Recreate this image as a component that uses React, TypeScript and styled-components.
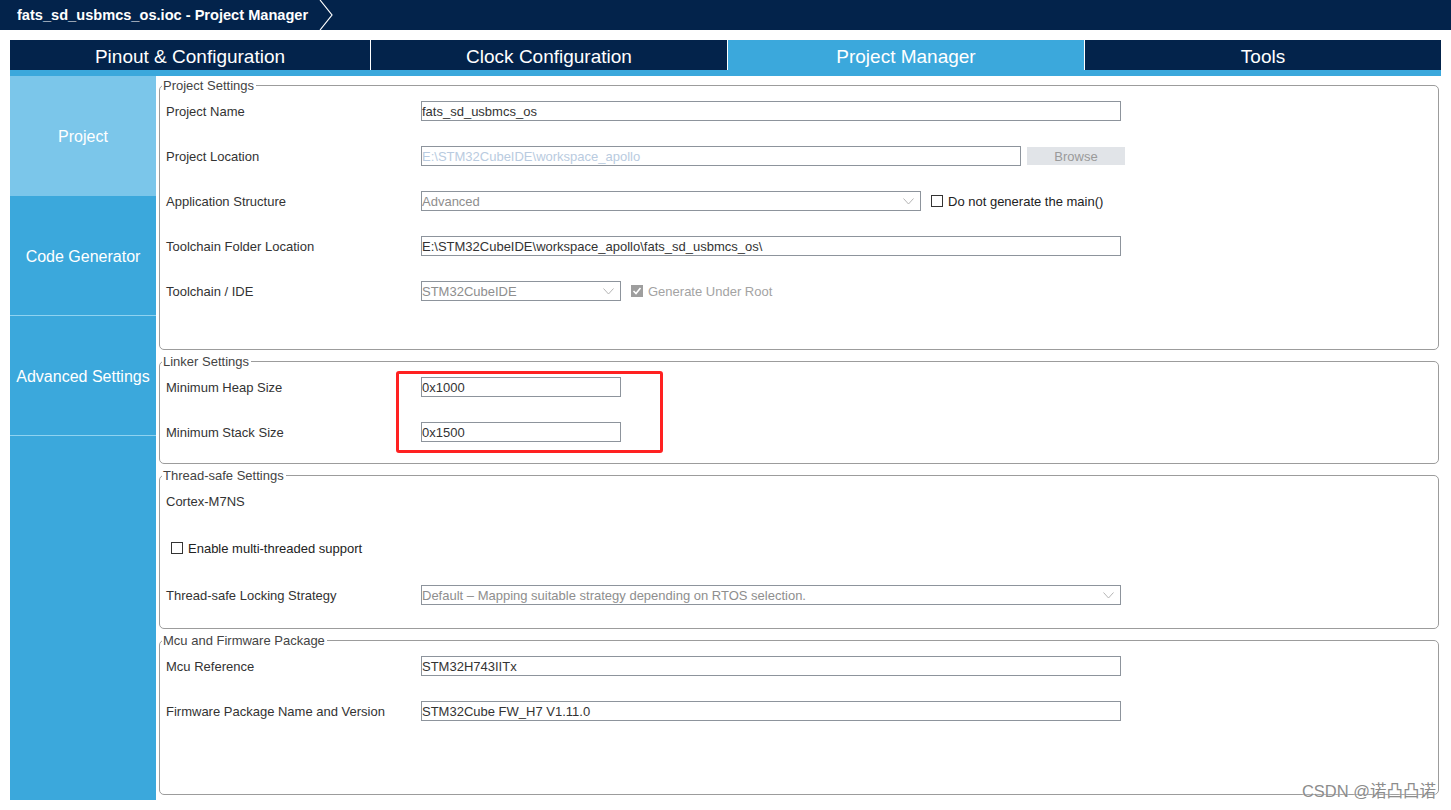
import React from "react";
import styled, { createGlobalStyle } from "styled-components";

const GlobalStyle = createGlobalStyle`
  html, body {
    margin: 0;
    padding: 0;
    background: #ffffff;
  }
  * {
    box-sizing: border-box;
  }
`;

const NAVY = "#03234b";
const BLUE = "#3ba8dc";
const LIGHT_BLUE = "#7bc6ea";

const Page = styled.div`
  position: relative;
  width: 1451px;
  height: 810px;
  overflow: hidden;
  background: #ffffff;
  font-family: "Liberation Sans", Arial, sans-serif;
`;

const TitleBar = styled.div`
  display: flex;
  align-items: center;
  height: 30px;
  padding-left: 17px;
  background: ${NAVY};
  color: #ffffff;
  font-size: 14.6px;
  font-weight: bold;

  & svg {
    margin-left: 11px;
  }
`;

const TabBar = styled.div`
  display: grid;
  grid-template-columns: 360px 356px 356px 1fr;
  gap: 1px;
  height: 30px;
  margin: 10px 10px 0;
  background: #ffffff;
`;

const Tab = styled.div<{ $active?: boolean }>`
  display: flex;
  align-items: center;
  justify-content: center;
  padding-top: 3px;
  background: ${({ $active }) => ($active ? BLUE : NAVY)};
  color: #ffffff;
  font-size: 19px;
`;

const Strip = styled.div`
  height: 6px;
  margin: 0 10px;
  background: ${BLUE};
`;

const Body = styled.div`
  display: flex;
  height: 724px;
  margin-left: 10px;
`;

const Sidebar = styled.nav`
  display: flex;
  flex-direction: column;
  width: 146px;
  background: ${BLUE};
`;

const NavItem = styled.div<{ $active?: boolean }>`
  display: flex;
  align-items: center;
  justify-content: center;
  height: 120px;
  padding-top: 3px;
  background: ${({ $active }) => ($active ? LIGHT_BLUE : BLUE)};
  border-bottom: 1px solid ${({ $active }) => ($active ? LIGHT_BLUE : "#8fd2f0")};
  color: #ffffff;
  font-size: 16px;
`;

const Content = styled.div`
  flex: 1;
  display: flex;
  flex-direction: column;
  gap: 3px;
  padding: 1px 12px 0 3px;
`;

const Group = styled.fieldset<{ $bottom: number }>`
  margin: 0;
  min-width: 0;
  padding: 0 0 ${({ $bottom }) => $bottom}px 6px;
  border: 1px solid #9c9c9c;
  border-radius: 5px;
`;

const Legend = styled.legend`
  margin-left: -4px;
  padding: 1px 2px 0 1px;
  font-size: 13px;
  line-height: 16px;
  color: #444444;
`;

const Rows = styled.div<{ $gap: number }>`
  position: relative;
  display: flex;
  flex-direction: column;
  gap: ${({ $gap }) => $gap}px;
  padding-top: 7px;
`;

const Row = styled.div`
  display: grid;
  grid-template-columns: 255px auto;
  align-items: center;
  height: 20px;
`;

const Label = styled.span`
  font-size: 13px;
  color: #333333;
  white-space: nowrap;
`;

const Controls = styled.div<{ $gap?: number }>`
  display: flex;
  align-items: center;
  gap: ${({ $gap }) => $gap ?? 0}px;
`;

const Field = styled.div<{ $width: number; $tone?: "normal" | "disabled" | "muted" }>`
  display: flex;
  align-items: center;
  justify-content: space-between;
  width: ${({ $width }) => $width}px;
  height: 20px;
  padding: 0 6px 0 0;
  border: 1px solid #8d949c;
  background: #ffffff;
  font-size: 13px;
  white-space: nowrap;
  overflow: hidden;
  color: ${({ $tone }) =>
    $tone === "disabled" ? "#b9cbe0" : $tone === "muted" ? "#8e8e8e" : "#333333"};
`;

const BrowseButton = styled.div`
  display: flex;
  align-items: center;
  justify-content: center;
  width: 98px;
  height: 18px;
  background: #e1e4e8;
  color: #9a9a9a;
  font-size: 13px;
`;

const Check = styled.label<{ $disabled?: boolean }>`
  display: flex;
  align-items: center;
  gap: 5px;
  font-size: 13px;
  color: ${({ $disabled }) => ($disabled ? "#a3a3a3" : "#222222")};
  white-space: nowrap;
`;

const Box = styled.span<{ $checked?: boolean }>`
  display: flex;
  align-items: center;
  justify-content: center;
  width: 12px;
  height: 12px;
  border: 1px solid ${({ $checked }) => ($checked ? "#9e9e9e" : "#333333")};
  background: ${({ $checked }) => ($checked ? "#9e9e9e" : "#ffffff")};
`;

const Indent = styled.div`
  display: flex;
  align-items: center;
  height: 20px;
  padding-left: 5px;
`;

const Highlight = styled.div`
  position: absolute;
  top: 1px;
  left: 230px;
  width: 267px;
  height: 82px;
  border: 3px solid #ff2121;
  border-radius: 3px;
  pointer-events: none;
`;

const Watermark = styled.div`
  position: absolute;
  right: 15px;
  bottom: 8px;
  font-family: "Liberation Sans", "Noto Sans CJK SC", sans-serif;
  font-size: 16.5px;
  color: #8c8c8c;
  text-shadow: 0 0 2px #ffffff;
`;

const Chevron = () => (
  <svg width="11" height="7" viewBox="0 0 11 7">
    <polyline points="0.5,0.5 5.5,6 10.5,0.5" fill="none" stroke="#b5b5b5" strokeWidth="1" />
  </svg>
);

const Select = ({ width, value }: { width: number; value: string }) => (
  <Field $width={width} $tone="muted">
    <span>{value}</span>
    <Chevron />
  </Field>
);

const Checkbox = ({
  label,
  checked,
  disabled,
}: {
  label: string;
  checked?: boolean;
  disabled?: boolean;
}) => (
  <Check $disabled={disabled}>
    <Box $checked={checked}>
      {checked && (
        <svg width="10" height="10" viewBox="0 0 10 10">
          <polyline points="1.5,5 4,7.5 8.5,2" fill="none" stroke="#ffffff" strokeWidth="1.6" />
        </svg>
      )}
    </Box>
    {label}
  </Check>
);

export default function App() {
  return (
    <Page>
      <GlobalStyle />
      <TitleBar>
        fats_sd_usbmcs_os.ioc - Project Manager
        <svg width="14" height="30" viewBox="0 0 14 30">
          <polyline points="1,0 13,15 1,30" fill="none" stroke="#ffffff" strokeWidth="1.2" />
        </svg>
      </TitleBar>

      <TabBar>
        <Tab>Pinout &amp; Configuration</Tab>
        <Tab>Clock Configuration</Tab>
        <Tab $active>Project Manager</Tab>
        <Tab>Tools</Tab>
      </TabBar>
      <Strip />

      <Body>
        <Sidebar>
          <NavItem $active>Project</NavItem>
          <NavItem>Code Generator</NavItem>
          <NavItem>Advanced Settings</NavItem>
        </Sidebar>

        <Content>
          <Group $bottom={48}>
            <Legend>Project Settings</Legend>
            <Rows $gap={25}>
              <Row>
                <Label>Project Name</Label>
                <Field $width={700}>fats_sd_usbmcs_os</Field>
              </Row>
              <Row>
                <Label>Project Location</Label>
                <Controls $gap={6}>
                  <Field $width={600} $tone="disabled">
                    E:\STM32CubeIDE\workspace_apollo
                  </Field>
                  <BrowseButton>Browse</BrowseButton>
                </Controls>
              </Row>
              <Row>
                <Label>Application Structure</Label>
                <Controls $gap={10}>
                  <Select width={500} value="Advanced" />
                  <Checkbox label="Do not generate the main()" />
                </Controls>
              </Row>
              <Row>
                <Label>Toolchain Folder Location</Label>
                <Field $width={700}>E:\STM32CubeIDE\workspace_apollo\fats_sd_usbmcs_os\</Field>
              </Row>
              <Row>
                <Label>Toolchain / IDE</Label>
                <Controls $gap={10}>
                  <Select width={200} value="STM32CubeIDE" />
                  <Checkbox label="Generate Under Root" checked disabled />
                </Controls>
              </Row>
            </Rows>
          </Group>

          <Group $bottom={21}>
            <Legend>Linker Settings</Legend>
            <Rows $gap={25}>
              <Row>
                <Label>Minimum Heap Size</Label>
                <Field $width={200}>0x1000</Field>
              </Row>
              <Row>
                <Label>Minimum Stack Size</Label>
                <Field $width={200}>0x1500</Field>
              </Row>
              <Highlight />
            </Rows>
          </Group>

          <Group $bottom={23}>
            <Legend>Thread-safe Settings</Legend>
            <Rows $gap={27}>
              <Row>
                <Label>Cortex-M7NS</Label>
              </Row>
              <Indent>
                <Checkbox label="Enable multi-threaded support" />
              </Indent>
              <Row>
                <Label>Thread-safe Locking Strategy</Label>
                <Select
                  width={700}
                  value="Default – Mapping suitable strategy depending on RTOS selection."
                />
              </Row>
            </Rows>
          </Group>

          <Group $bottom={73}>
            <Legend>Mcu and Firmware Package</Legend>
            <Rows $gap={25}>
              <Row>
                <Label>Mcu Reference</Label>
                <Field $width={700}>STM32H743IITx</Field>
              </Row>
              <Row>
                <Label>Firmware Package Name and Version</Label>
                <Field $width={700}>STM32Cube FW_H7 V1.11.0</Field>
              </Row>
            </Rows>
          </Group>
        </Content>
      </Body>

      <Watermark>CSDN @诺凸凸诺</Watermark>
    </Page>
  );
}
